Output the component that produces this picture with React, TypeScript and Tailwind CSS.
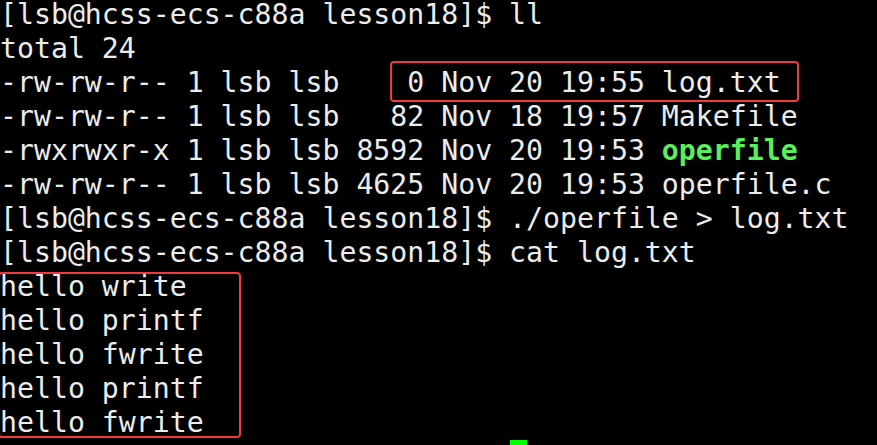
import React from "react";

const W = "text-[#ececec]";

function Line({ children }: { children: React.ReactNode }) {
  return <div className={`h-[34px] whitespace-pre ${W}`}>{children}</div>;
}

export default function App() {
  return (
    <div className="w-[877px] h-[445px] bg-black overflow-hidden">
      <div
        className="relative -mt-[2px] text-[28.2px] leading-[34px]"
        style={{ fontFamily: '"DejaVu Sans Mono", monospace' }}
      >
        <Line>[lsb@hcss-ecs-c88a lesson18]$ ll</Line>
        <Line>total 24</Line>
        <Line>-rw-rw-r-- 1 lsb lsb    0 Nov 20 19:55 log.txt</Line>
        <Line>-rw-rw-r-- 1 lsb lsb   82 Nov 18 19:57 Makefile</Line>
        <Line>
          -rwxrwxr-x 1 lsb lsb 8592 Nov 20 19:53{" "}
          <span className="font-bold text-[#5af05a]">operfile</span>
        </Line>
        <Line>-rw-rw-r-- 1 lsb lsb 4625 Nov 20 19:53 operfile.c</Line>
        <Line>[lsb@hcss-ecs-c88a lesson18]$ ./operfile &gt; log.txt</Line>
        <Line>[lsb@hcss-ecs-c88a lesson18]$ cat log.txt</Line>
        <Line>hello write</Line>
        <Line>hello printf</Line>
        <Line>hello fwrite</Line>
        <Line>hello printf</Line>
        <Line>hello fwrite</Line>
        <div className="h-[34px] pl-[510px] pt-[0px]">
          <div className="w-[17px] h-[28px] bg-[#00ff00]" />
        </div>

        <div className="absolute left-[390px] top-[63px] w-[409px] h-[41px] border-2 border-[#ef3b3b] rounded-[4px]" />
        <div className="absolute left-[-2px] top-[274px] w-[243px] h-[166px] border-2 border-[#ef3b3b] rounded-[4px]" />
      </div>
    </div>
  );
}
